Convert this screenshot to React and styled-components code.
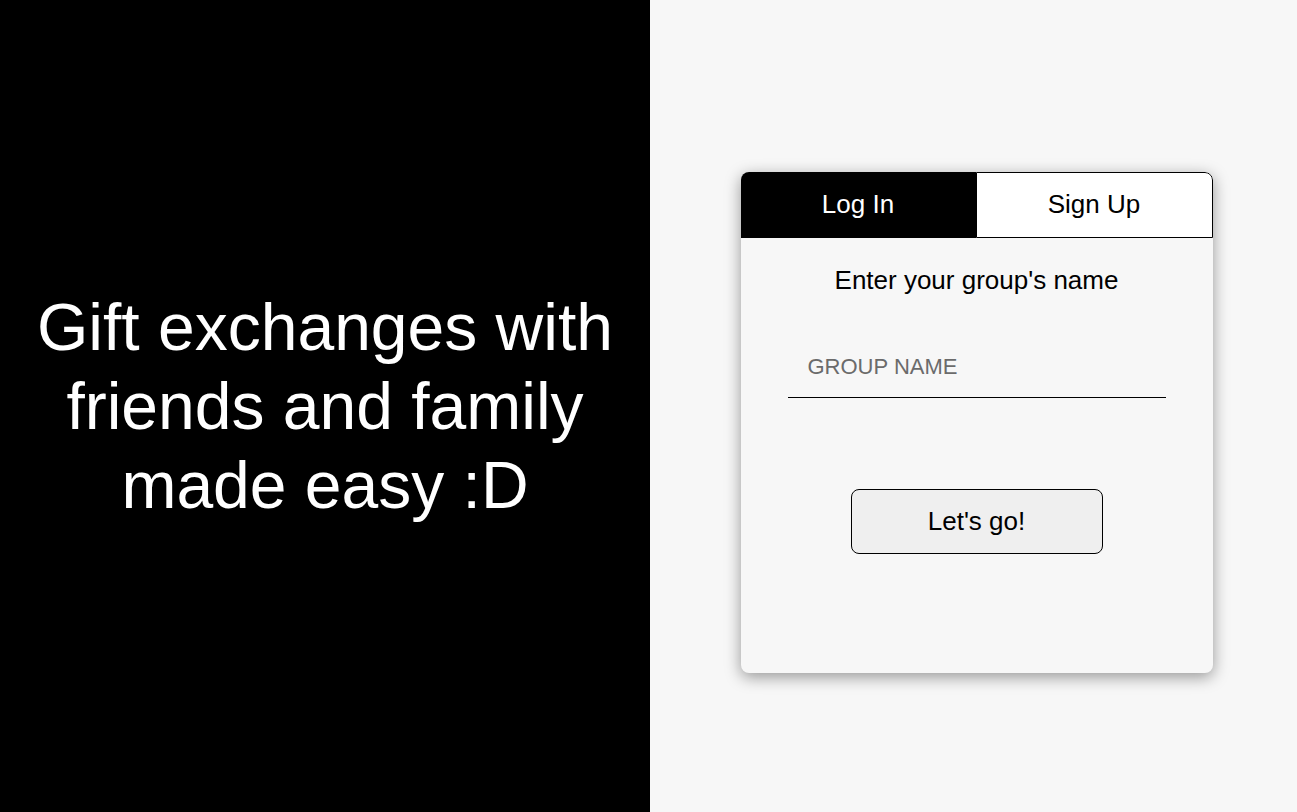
import React from 'react'
import styled, { createGlobalStyle } from 'styled-components'

const GlobalStyle = createGlobalStyle`
  html, body {
    margin: 0;
    padding: 0;
  }
  body {
    font-family: "Liberation Sans", Arial, Helvetica, sans-serif;
  }
  * {
    box-sizing: border-box;
  }
`

const Wrapper = styled.div`
  display: flex;
  width: 100%;
  height: 812px;
`

const Hero = styled.div`
  width: 650px;
  flex-shrink: 0;
  background-color: #000;
  display: flex;
  align-items: center;
  justify-content: center;
`

const HeroTitle = styled.h1`
  margin: 0;
  color: #fff;
  font-weight: 400;
  font-size: 66px;
  line-height: 79px;
  text-align: center;
  width: 600px;
`

const Side = styled.div`
  flex: 1;
  background-color: #f7f7f7;
  display: flex;
  align-items: center;
  justify-content: center;
  padding: 33px 0 0 6px;
`

const Card = styled.div`
  width: 472px;
  height: 501px;
  background-color: #f7f7f7;
  border-radius: 8px;
  box-shadow: 0 4px 16px rgba(0, 0, 0, 0.4);
  overflow: hidden;
  display: flex;
  flex-direction: column;
`

const Tabs = styled.div`
  display: flex;
  height: 66px;
`

const Tab = styled.button`
  flex: 1;
  margin: 0;
  font-family: inherit;
  font-size: 26px;
  display: flex;
  align-items: center;
  justify-content: center;
  cursor: pointer;
  background-color: ${p => (p.active ? '#000' : '#fff')};
  color: ${p => (p.active ? '#fff' : '#000')};
  border: ${p => (p.active ? 'none' : '1px solid #000')};
  border-top-right-radius: ${p => (p.active ? '0' : '8px')};
  padding: 0 0 2px;
`

const Form = styled.div`
  display: flex;
  flex-direction: column;
  align-items: center;
  padding-top: 27px;
`

const Prompt = styled.div`
  font-size: 26px;
  line-height: 30px;
  color: #000;
`

const NameInput = styled.input`
  margin-top: 41px;
  width: 378px;
  height: 62px;
  border: none;
  border-bottom: 1px solid #000;
  background: transparent;
  font-family: inherit;
  font-size: 22px;
  padding: 0 20px;
  outline: none;
  &::placeholder {
    color: #6b6b6b;
  }
`

const GoButton = styled.button`
  margin-top: 91px;
  width: 252px;
  height: 65px;
  border: 1px solid #000;
  border-radius: 8px;
  background-color: #efefef;
  font-family: inherit;
  font-size: 26px;
  color: #000;
  cursor: pointer;
`

function App() {
  return (
    <Wrapper>
      <GlobalStyle />
      <Hero>
        <HeroTitle>
          Gift exchanges with friends and family made easy :D
        </HeroTitle>
      </Hero>
      <Side>
        <Card>
          <Tabs>
            <Tab active>Log In</Tab>
            <Tab>Sign Up</Tab>
          </Tabs>
          <Form>
            <Prompt>Enter your group's name</Prompt>
            <NameInput placeholder="GROUP NAME" />
            <GoButton>Let's go!</GoButton>
          </Form>
        </Card>
      </Side>
    </Wrapper>
  )
}

export default App
